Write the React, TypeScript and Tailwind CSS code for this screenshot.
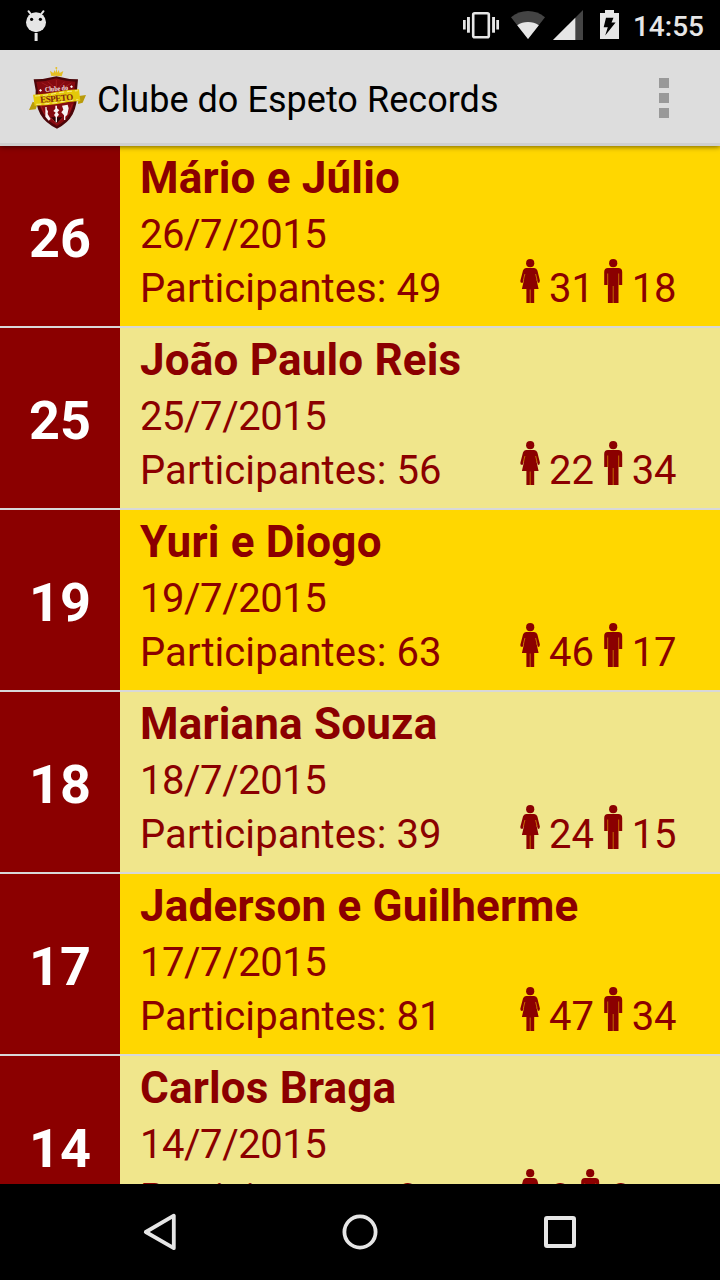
import React from "react";

type Entry = {
  day: string;
  name: string;
  date: string;
  total: number;
  women: number;
  men: number;
};

const entries: Entry[] = [
  { day: "26", name: "Mário e Júlio", date: "26/7/2015", total: 49, women: 31, men: 18 },
  { day: "25", name: "João Paulo Reis", date: "25/7/2015", total: 56, women: 22, men: 34 },
  { day: "19", name: "Yuri e Diogo", date: "19/7/2015", total: 63, women: 46, men: 17 },
  { day: "18", name: "Mariana Souza", date: "18/7/2015", total: 39, women: 24, men: 15 },
  { day: "17", name: "Jaderson e Guilherme", date: "17/7/2015", total: 81, women: 47, men: 34 },
  { day: "14", name: "Carlos Braga", date: "14/7/2015", total: 0, women: 0, men: 0 },
];

function StatusBar() {
  return (
    <div className="flex h-[50px] shrink-0 items-center justify-between bg-black">
      <svg className="h-[50px] w-[60px]" viewBox="0 0 60 50" fill="#e6e6e6">
        <circle cx="36" cy="22.3" r="10" />
        <path d="M28.500 11.200 L31.500 15 M43.500 11.200 L40.500 15" stroke="#e6e6e6" strokeWidth="2" strokeLinecap="round" />
        <rect x="34.6" y="33" width="3" height="8" />
        <circle cx="31.6" cy="19.3" r="1.6" fill="#000" />
        <circle cx="40.4" cy="19.3" r="1.6" fill="#000" />
      </svg>
      <div className="flex items-center pr-[16px]">
        <svg className="h-[50px] w-[184px]" viewBox="449 0 184 50" fill="#e6e6e6">
          <rect x="473.2" y="13.2" width="15.6" height="24" rx="1.5" fill="none" stroke="#e6e6e6" strokeWidth="2.6" />
          <rect x="467" y="17" width="2.9" height="15.7" />
          <rect x="463" y="20" width="2.7" height="9.5" />
          <rect x="492.1" y="17" width="2.9" height="15.7" />
          <rect x="496.3" y="20" width="2.7" height="9.5" />
          <path d="M528 39 L511 17.200 Q518.500 11 528 11 Q537.500 11 545 17.200 Z" fill="#444" />
          <path d="M528 39 L517.200 25.200 Q522 22 528 22 Q534 22 538.800 25.200 Z" />
          <path d="M553 40 L583 10 V40 Z" fill="#444" />
          <path d="M553 40 L575.300 17.700 V40 Z" />
          <path d="M600 13 H605 V10 H614 V13 H619 V39 H600 Z" />
          <path d="M606 17.700 H613.500 L611.500 22.600 H615.600 L605.200 35.500 L607.800 27.200 H603.700 Z" fill="#000" />
        </svg>
        <span className="pt-[3px] text-[28px] leading-[32px] font-medium text-[#e6e6e6]">14:55</span>
      </div>
    </div>
  );
}

function Crest() {
  return (
    <svg className="h-16 w-16 shrink-0" viewBox="12 15 192 192">
      <path d="M94 48 L90 32 L100 39 L104 30 L107 38 L109 24 L112 38 L116 30 L119 39 L130 33 L125 49 Q109 46 94 48 Z" fill="#e5be24" />
      <circle cx="109" cy="24" r="3" fill="#e5be24" />
      <path d="M41 58 Q76 58 109 49 Q142 58 174 58 L171 90 Q174 130 158 163 Q143 191 111 206 Q77 191 61 163 Q44 130 47 91 Z" fill="#4b0509" />
      <path d="M49 65 Q79 65 109 55 Q139 65 166 65 L163 91 Q166 132 151 158 Q138 183 111 198 Q82 183 69 158 Q51 128 54 92 Z" fill="#850a10" />
      <path d="M65 68 L96 85 M83 65 L102 81 M109 60 V80 M134 65 L117 82 M154 69 L125 87 M61 133 L74 163 M157 132 L145 163 M92 172 L110 192 L129 172" stroke="#b3262a" strokeWidth="3" opacity=".65" />
      <path d="M57 91 L62 87 L66 92 L61 95 Z M150 80 L155 76 L159 81 L154 84 Z" fill="#fff" />
      <text x="75" y="93" transform="rotate(-5 109 88)" fontFamily="Liberation Serif" fontWeight="700" fontSize="22" textLength="69" lengthAdjust="spacingAndGlyphs" fill="#f7e9e9">Clube do</text>
      <path d="M38 125 L27 150 L47 148 L53 131 Z M176 108 L198 105 L188 128 L174 132 Z" fill="#b99b0b" />
      <path d="M39 104 Q75 102 111 95 Q145 89 177 88 L181 123 Q144 125 111 132 Q78 137 44 137 Z" fill="#e4c90a" />
      <path d="M45 108 Q80 106 113 99 Q145 94 173 92 M49 133 Q82 132 113 127 Q146 121 175 119" fill="none" stroke="#fff5a6" strokeWidth="2.5" strokeDasharray="15 9" />
      <text x="61" y="124" transform="rotate(-5 111 118)" fontFamily="Liberation Serif" fontWeight="700" fontSize="27" textLength="99" lengthAdjust="spacing" fill="#83240f">ESPETO</text>
      <path d="M76 141 H80 V148 L84 154 L83 162 L92 177 L86 182 L76 170 Z M106 137 H111 V145 L118 151 L112 157 L117 164 L111 171 V187 H107 V171 L102 165 L107 158 L100 153 L106 146 Z M126 137 L143 134 L146 145 L142 164 L136 170 V180 H132 V166 L124 157 L130 149 Z" fill="#f6f1f1" />
    </svg>
  );
}

function AppBar() {
  return (
    <header className="relative z-10 flex h-24 shrink-0 items-center border-b-[3px] border-[#cfcfcf] bg-[#ddd] pl-6 shadow-[0_1px_5px_rgba(0,0,0,0.55)]">
      <Crest />
      <h1 className="ml-[9px] grow pt-[6px] text-[36px] leading-[44px] tracking-[0.04px] whitespace-nowrap text-black">Clube do Espeto Records</h1>
      <div className="mr-[51px] flex flex-col gap-[5px] pt-[2px]">
        <i className="size-[10px] bg-[#999]" />
        <i className="size-[10px] bg-[#999]" />
        <i className="size-[10px] bg-[#999]" />
      </div>
    </header>
  );
}

function Woman() {
  return (
    <svg className="-mt-px h-[54px] w-[38px] shrink-0 overflow-visible" viewBox="0 0 38 54" fill="#8b0000">
      <circle cx="19.2" cy="2.2" r="4.1" />
      <path d="M15 7 H23.200 Q25.600 7 26.400 9.500 L28.900 19.500 Q29 22 27 22 L25.300 17.500 L27.600 28 H23.200 V42 H15.400 V28 H10.900 L13.300 17.500 L11.500 22 Q9 22 9.400 19.500 L12 9.500 Q12.800 7 15 7 Z" />
      <path d="M19.200 28.500 V42 M13.900 13 L12.300 19.500 M24.600 13 L26.200 19.500" stroke="#ffd700" strokeWidth="0.9" opacity="0.55" />
    </svg>
  );
}

function Man() {
  return (
    <svg className="-mt-px h-[54px] w-[38px] shrink-0 overflow-visible" viewBox="0 0 38 54" fill="#8b0000">
      <circle cx="19.2" cy="2.2" r="4.1" />
      <path d="M14 7 H24.300 Q28.200 7 28.200 11 V23.900 H24.500 V42 H13.900 V23.900 H10.200 V11 Q10.200 7 14 7 Z" />
      <path d="M13.700 12.500 V24 M24.700 12.500 V24 M19.200 25 V42" stroke="#ffd700" strokeWidth="0.9" opacity="0.55" />
    </svg>
  );
}

function Row({ entry }: { entry: Entry }) {
  return (
    <li className="group flex h-[182px] shrink-0 border-b-2 border-[#d8d8d8]">
      <div className="flex w-[120px] shrink-0 items-center justify-center bg-[#8b0000] pt-[4px] text-[54px] font-bold text-white">
        {entry.day}
      </div>
      <div className="grow bg-[#ffd700] pt-[3px] pl-5 text-[40px] leading-[54px] text-[#8b0000] group-even:bg-[#f0e68c]">
        <h2 className="mb-px text-[44px] leading-[58px] font-bold tracking-[0.18px]">{entry.name}</h2>
        <p className="tracking-[-0.45px]">{entry.date}</p>
        <div className="flex">
          <p className="w-[371px] tracking-[0.05px]">Participantes: {entry.total}</p>
          <Woman />
          <span className="tracking-[-0.1px]">{entry.women}</span>
          <Man />
          <span className="tracking-[-0.2px]">{entry.men}</span>
        </div>
      </div>
    </li>
  );
}

function NavBar() {
  return (
    <nav className="flex h-24 shrink-0 items-center justify-center gap-[152px] bg-black">
      <svg className="size-12" viewBox="0 0 48 48" fill="none" stroke="#e6e6e6" strokeWidth="3.8" strokeLinejoin="round">
        <path d="M37.800 7.700 V40.200 L9.800 24 Z" />
      </svg>
      <svg className="size-12" viewBox="0 0 48 48" fill="none" stroke="#e6e6e6" strokeWidth="3.8">
        <circle cx="24" cy="24" r="15.6" />
      </svg>
      <svg className="size-12" viewBox="0 0 48 48" fill="none" stroke="#e6e6e6" strokeWidth="4" strokeLinejoin="round">
        <rect x="10" y="10" width="28" height="28" rx="1" />
      </svg>
    </nav>
  );
}

export default function App() {
  return (
    <div className="flex h-[1280px] w-[720px] flex-col overflow-hidden bg-black font-[Roboto,sans-serif]">
      <StatusBar />
      <AppBar />
      <ul className="flex min-h-0 grow flex-col overflow-hidden">
        {entries.map((entry) => (
          <Row key={entry.day} entry={entry} />
        ))}
      </ul>
      <NavBar />
    </div>
  );
}
